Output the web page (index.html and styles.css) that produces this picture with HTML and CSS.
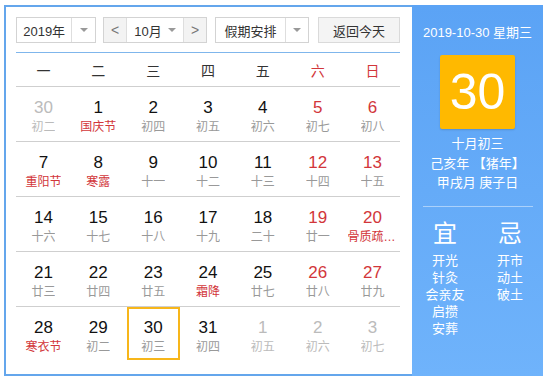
FILE: index.html
```html
<!DOCTYPE html>
<html>
<head>
  <meta charset="utf-8" />
  <title>万年历</title>
  <link rel="stylesheet" href="styles.css">
</head>
<body>
<div class="calendar">

  <!-- LEFT: month grid -->
  <div class="main">
    <div class="toolbar">
      <div class="select year-select">
        <span class="select-label">2019年</span>
        <span class="select-arrow"><i class="caret"></i></span>
      </div>
      <div class="month-group">
        <span class="nav-btn">&lt;</span>
        <span class="month-label">10月 <i class="caret"></i></span>
        <span class="nav-btn">&gt;</span>
      </div>
      <div class="select holiday-select">
        <span class="select-label">假期安排</span>
        <span class="select-arrow"><i class="caret"></i></span>
      </div>
      <div class="today-btn">返回今天</div>
    </div>

    <div class="weekdays">
      <span>一</span><span>二</span><span>三</span><span>四</span><span>五</span>
      <span class="weekend">六</span><span class="weekend">日</span>
    </div>

    <div class="days">
      <div class="day other"><b>30</b><em>初二</em></div>
      <div class="day"><b>1</b><em class="red">国庆节</em></div>
      <div class="day"><b>2</b><em>初四</em></div>
      <div class="day"><b>3</b><em>初五</em></div>
      <div class="day"><b>4</b><em>初六</em></div>
      <div class="day weekend"><b>5</b><em>初七</em></div>
      <div class="day weekend"><b>6</b><em>初八</em></div>

      <div class="day"><b>7</b><em class="red">重阳节</em></div>
      <div class="day"><b>8</b><em class="red">寒露</em></div>
      <div class="day"><b>9</b><em>十一</em></div>
      <div class="day"><b>10</b><em>十二</em></div>
      <div class="day"><b>11</b><em>十三</em></div>
      <div class="day weekend"><b>12</b><em>十四</em></div>
      <div class="day weekend"><b>13</b><em>十五</em></div>

      <div class="day"><b>14</b><em>十六</em></div>
      <div class="day"><b>15</b><em>十七</em></div>
      <div class="day"><b>16</b><em>十八</em></div>
      <div class="day"><b>17</b><em>十九</em></div>
      <div class="day"><b>18</b><em>二十</em></div>
      <div class="day weekend"><b>19</b><em>廿一</em></div>
      <div class="day weekend"><b>20</b><em class="red">骨质疏松日</em></div>

      <div class="day"><b>21</b><em>廿三</em></div>
      <div class="day"><b>22</b><em>廿四</em></div>
      <div class="day"><b>23</b><em>廿五</em></div>
      <div class="day"><b>24</b><em class="red">霜降</em></div>
      <div class="day"><b>25</b><em>廿七</em></div>
      <div class="day weekend"><b>26</b><em>廿八</em></div>
      <div class="day weekend"><b>27</b><em>廿九</em></div>

      <div class="day last"><b>28</b><em class="red">寒衣节</em></div>
      <div class="day last"><b>29</b><em>初二</em></div>
      <div class="day last today"><b>30</b><em>初三</em></div>
      <div class="day last"><b>31</b><em>初四</em></div>
      <div class="day last other"><b>1</b><em>初五</em></div>
      <div class="day last other"><b>2</b><em>初六</em></div>
      <div class="day last other"><b>3</b><em>初七</em></div>
    </div>
  </div>

  <!-- RIGHT: selected day details -->
  <div class="side">
    <div class="side-date">2019-10-30 星期三</div>
    <div class="side-day">30</div>
    <div class="side-lunar">
      <p>十月初三</p>
      <p>己亥年 【猪年】</p>
      <p>甲戌月 庚子日</p>
    </div>
    <div class="side-divider"></div>
    <div class="almanac">
      <div class="almanac-col">
        <h3>宜</h3>
        <p>开光</p><p>针灸</p><p>会亲友</p><p>启攒</p><p>安葬</p>
      </div>
      <div class="almanac-col">
        <h3>忌</h3>
        <p>开市</p><p>动土</p><p>破土</p>
      </div>
    </div>
  </div>

</div>
</body>
</html>
```

FILE: styles.css
```css
html, body {
  margin: 0;
  padding: 0;
  background: #fff;
  font-family: "Liberation Sans", Arial, "Noto Sans CJK SC", sans-serif;
  box-sizing: border-box;
}
*, *::before, *::after {
  box-sizing: inherit;
}

.calendar {
  display: flex;
  width: 539px;
  height: 371px;
  margin: 5px 0 0 4px;
}

/* Left column */
.main {
  width: 408px;
  border: 2px solid #64a6ec;
  border-right: none;
  padding: 10px 12px 0 10px;
  background: #fff;
}

.toolbar {
  display: flex;
  height: 26px;
  font-size: 13px;
  color: #333;
}
.select {
  display: flex;
  border: 1px solid #d3d3d3;
  background: #fff;
}
.select-label {
  display: flex;
  align-items: center;
  justify-content: center;
  border-right: 1px solid #dedede;
}
.select-arrow {
  display: flex;
  align-items: center;
  justify-content: center;
  width: 23px;
}
.caret {
  display: inline-block;
  width: 0;
  height: 0;
  border-left: 4px solid transparent;
  border-right: 4px solid transparent;
  border-top: 4px solid #999;
  vertical-align: middle;
}
.year-select {
  width: 80px;
}
.year-select .select-label {
  width: 56px;
}
.month-group {
  display: flex;
  width: 104px;
  margin-left: 7px;
  border: 1px solid #d3d3d3;
}
.nav-btn {
  display: flex;
  align-items: center;
  justify-content: center;
  width: 22px;
  background: #f3f3f3;
  color: #777;
  font-size: 14px;
}
.month-label {
  flex: 1;
  display: flex;
  align-items: center;
  justify-content: center;
  gap: 6px;
  border-left: 1px solid #dedede;
  border-right: 1px solid #dedede;
}
.holiday-select {
  width: 94px;
  margin-left: 8px;
}
.holiday-select .select-label {
  width: 70px;
}
.holiday-select .select-arrow {
  flex: 1;
}
.today-btn {
  display: flex;
  align-items: center;
  justify-content: center;
  width: 82px;
  margin-left: auto;
  border: 1px solid #dadada;
  background: #f4f4f4;
}

.weekdays {
  display: grid;
  grid-template-columns: repeat(7, 1fr);
  height: 35px;
  margin-top: 9px;
  border-top: 1px solid #7fb6ec;
  border-bottom: 1px solid #cfcfcf;
  font-size: 14px;
  color: #333;
}
.weekdays span {
  display: flex;
  align-items: center;
  justify-content: center;
}
.weekdays .weekend {
  color: #d2363a;
}

.days {
  display: grid;
  grid-template-columns: repeat(7, 1fr);
  grid-auto-rows: 55px;
}
.day {
  display: flex;
  flex-direction: column;
  align-items: center;
  padding-top: 11px;
  border-bottom: 1px solid #cfcfcf;
}
.day.last {
  border-bottom: none;
}
.day b {
  font-weight: normal;
  font-size: 17px;
  line-height: 20px;
  color: #111;
}
.day em {
  font-style: normal;
  font-size: 12px;
  line-height: 18px;
  color: #999;
  max-width: 50px;
  white-space: nowrap;
  overflow: hidden;
  text-overflow: ellipsis;
}
.day.weekend b {
  color: #d2363a;
}
.day em.red {
  color: #d2363a;
}
.day.other b,
.day.other em {
  color: #bbb;
}
.day.today {
  height: 53px;
  padding-top: 9px;
  margin: 0 1px 0 1px;
  border: 2px solid #f7b61a;
}

/* Right column */
.side {
  flex: 1;
  display: flex;
  flex-direction: column;
  align-items: center;
  background: linear-gradient(#5ba3f5, #6fb3fb);
  color: #fff;
}
.side-date {
  margin-top: 18px;
  font-size: 13px;
  line-height: 20px;
}
.side-day {
  width: 75px;
  height: 74px;
  margin-top: 12px;
  background: #ffb900;
  border-radius: 2px;
  box-shadow: 0 1px 2px rgba(0, 0, 0, 0.15);
  font-size: 50px;
  line-height: 74px;
  text-align: center;
}
.side-lunar {
  margin-top: 5px;
  text-align: center;
  font-size: 13px;
}
.side-lunar p {
  margin: 0;
  line-height: 19.5px;
}
.side-divider {
  width: 110px;
  height: 1px;
  margin-top: 13px;
  background: rgba(255, 255, 255, 0.45);
}
.almanac {
  display: flex;
  gap: 25px;
  margin-top: 12px;
}
.almanac-col {
  width: 40px;
  text-align: center;
}
.almanac-col h3 {
  margin: 0 0 3px;
  font-size: 24px;
  font-weight: normal;
  line-height: 30px;
}
.almanac-col p {
  margin: 0;
  font-size: 13px;
  line-height: 17px;
}
```
